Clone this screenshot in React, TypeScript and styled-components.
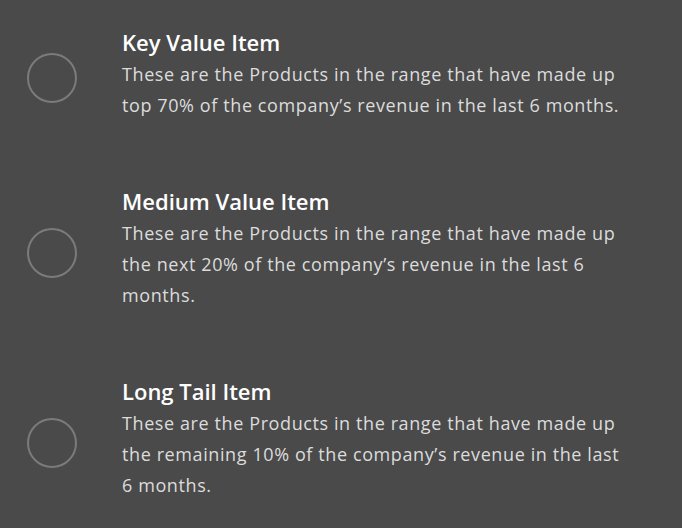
import styled, { createGlobalStyle } from 'styled-components';

const GlobalStyle = createGlobalStyle`
  html, body {
    margin: 0;
    padding: 0;
    background: #4a4a4a;
  }
  body {
    font-family: "Open Sans", "Liberation Sans", sans-serif;
  }
`;

const items = [
  {
    title: 'Key Value Item',
    text: 'These are the Products in the range that have made up top 70% of the company’s revenue in the last 6 months.',
  },
  {
    title: 'Medium Value Item',
    text: 'These are the Products in the range that have made up the next 20% of the company’s revenue in the last 6 months.',
  },
  {
    title: 'Long Tail Item',
    text: 'These are the Products in the range that have made up the remaining 10% of the company’s revenue in the last 6 months.',
  },
];

const App = () => {
  return (
    <>
      <GlobalStyle />
      <OptionList>
        {items.map((item) => (
          <OptionRow key={item.title}>
            <Radio />
            <OptionBody>
              <OptionTitle>{item.title}</OptionTitle>
              <OptionText>{item.text}</OptionText>
            </OptionBody>
          </OptionRow>
        ))}
      </OptionList>
    </>
  );
};

export default App;

const OptionList = styled.div`
  display: flex;
  flex-direction: column;
  gap: 63px;
  width: 682px;
  height: 528px;
  padding: 25px 0 0 27px;
  box-sizing: border-box;
  background: #4a4a4a;
`;

const OptionRow = styled.div`
  display: flex;
  align-items: center;
  gap: 45px;
`;

const Radio = styled.span`
  flex: none;
  width: 46px;
  height: 46px;
  margin-top: 10px;
  border: 2px solid #7b7b7b;
  border-radius: 50%;
`;

const OptionBody = styled.div`
  display: flex;
  flex-direction: column;
  width: 506px;
`;

const OptionTitle = styled.div`
  font-size: 22px;
  line-height: 34px;
  font-weight: 600;
  color: #ffffff;
`;

const OptionText = styled.div`
  font-size: 18px;
  line-height: 31px;
  font-weight: 500;
  letter-spacing: 0.6px;
  color: #dcdcdc;
`;
